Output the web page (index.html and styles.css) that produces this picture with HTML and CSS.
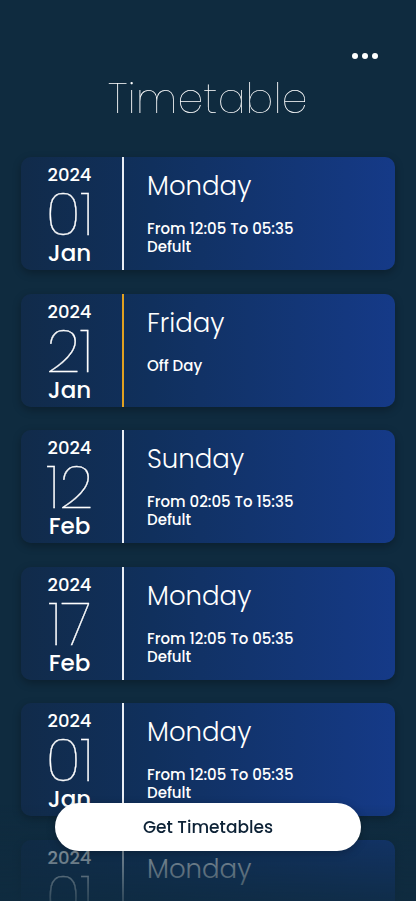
FILE: index.html
```html
<!DOCTYPE html>
<html lang="en">
<head>
<meta charset="utf-8">
<title>Timetable</title>
<link rel="stylesheet" href="styles.css">
</head>
<body>
<div class="screen">
  <header class="header">
    <div class="menu" aria-label="More">
      <span class="dot"></span><span class="dot"></span><span class="dot"></span>
    </div>
    <h1 class="title">Timetable</h1>
  </header>

  <main class="list">
    <div class="card">
      <div class="date"><span class="year">2024</span><span class="day">01</span><span class="month">Jan</span></div>
      <div class="divider"></div>
      <div class="info"><span class="weekday">Monday</span><span class="detail">From 12:05 To 05:35</span><span class="detail">Defult</span></div>
    </div>
    <div class="card">
      <div class="date"><span class="year">2024</span><span class="day">21</span><span class="month">Jan</span></div>
      <div class="divider off"></div>
      <div class="info"><span class="weekday">Friday</span><span class="detail">Off Day</span></div>
    </div>
    <div class="card">
      <div class="date"><span class="year">2024</span><span class="day">12</span><span class="month">Feb</span></div>
      <div class="divider"></div>
      <div class="info"><span class="weekday">Sunday</span><span class="detail">From 02:05 To 15:35</span><span class="detail">Defult</span></div>
    </div>
    <div class="card">
      <div class="date"><span class="year">2024</span><span class="day">17</span><span class="month">Feb</span></div>
      <div class="divider"></div>
      <div class="info"><span class="weekday">Monday</span><span class="detail">From 12:05 To 05:35</span><span class="detail">Defult</span></div>
    </div>
    <div class="card">
      <div class="date"><span class="year">2024</span><span class="day">01</span><span class="month">Jan</span></div>
      <div class="divider"></div>
      <div class="info"><span class="weekday">Monday</span><span class="detail">From 12:05 To 05:35</span><span class="detail">Defult</span></div>
    </div>
    <div class="card">
      <div class="date"><span class="year">2024</span><span class="day">01</span><span class="month">Jan</span></div>
      <div class="divider"></div>
      <div class="info"><span class="weekday">Monday</span><span class="detail">From 12:05 To 05:35</span><span class="detail">Defult</span></div>
    </div>
  </main>

  <div class="fade"></div>
  <button class="cta" type="button">Get Timetables</button>
</div>
</body>
</html>
```

FILE: styles.css
```css
* { box-sizing: border-box; }

html, body {
  margin: 0;
  padding: 0;
  background: #0f2b3f;
}

body {
  font-family: "Poppins", "Inter", "Noto Sans", sans-serif;
  color: #ffffff;
}

.screen {
  position: relative;
  width: 416px;
  height: 901px;
  overflow: hidden;
  background: #0f2b3f;
}

.header {
  display: flex;
  flex-direction: column;
  align-items: center;
  padding-top: 53px;
}

.menu {
  align-self: flex-end;
  display: flex;
  gap: 4px;
  margin-right: 38px;
  height: 6px;
  align-items: center;
}

.dot {
  width: 6px;
  height: 6px;
  border-radius: 50%;
  background: #ffffff;
}

.title {
  margin: 15px 0 0;
  font-size: 41px;
  line-height: 50px;
  font-weight: 200;
  letter-spacing: 0.4px;
  transform: translateZ(0);
}

.list {
  display: flex;
  flex-direction: column;
  gap: 23.5px;
  padding: 0 21px;
  margin-top: 33px;
}

.card {
  flex: none;
  display: flex;
  height: 113px;
  border-radius: 10px;
  background: linear-gradient(90deg, #112b4a 0%, #10305d 35%, #153a88 100%);
  box-shadow: 0 3px 8px rgba(0, 0, 0, 0.28);
}

.date {
  width: 101px;
  display: flex;
  flex-direction: column;
  align-items: center;
  padding: 7px 4px 0 0;
}

.year {
  font-size: 18px;
  line-height: 22px;
  font-weight: 500;
}

.day {
  font-size: 60px;
  line-height: 54px;
  font-weight: 200;
  letter-spacing: -0.5px;
  margin-top: 1px;
  -webkit-text-stroke: 0.3px #ffffff;
  transform: translateZ(0);
}

.month {
  font-size: 23px;
  line-height: 24px;
  font-weight: 500;
}

.divider {
  width: 2px;
  background: #e9eef5;
}

.divider.off {
  background: #e0a020;
}

.info {
  display: flex;
  flex-direction: column;
  padding: 12px 0 0 23px;
}

.weekday {
  font-size: 26px;
  line-height: 34px;
  font-weight: 300;
  margin-bottom: 17px;
}

.detail {
  font-size: 15px;
  line-height: 18px;
  font-weight: 500;
}

.fade {
  position: absolute;
  left: 0;
  right: 0;
  bottom: 0;
  height: 96px;
  background: linear-gradient(180deg, rgba(15, 43, 63, 0) 0%, rgba(15, 43, 63, 0.5) 40%, rgba(15, 43, 63, 0.85) 100%);
  pointer-events: none;
}

.cta {
  position: absolute;
  left: 55px;
  top: 803px;
  width: 306px;
  height: 48px;
  border: none;
  border-radius: 24px;
  background: #ffffff;
  color: #0d2236;
  font-family: inherit;
  font-size: 17px;
  font-weight: 500;
  box-shadow: 0 2px 8px rgba(0, 0, 0, 0.25);
}
```
